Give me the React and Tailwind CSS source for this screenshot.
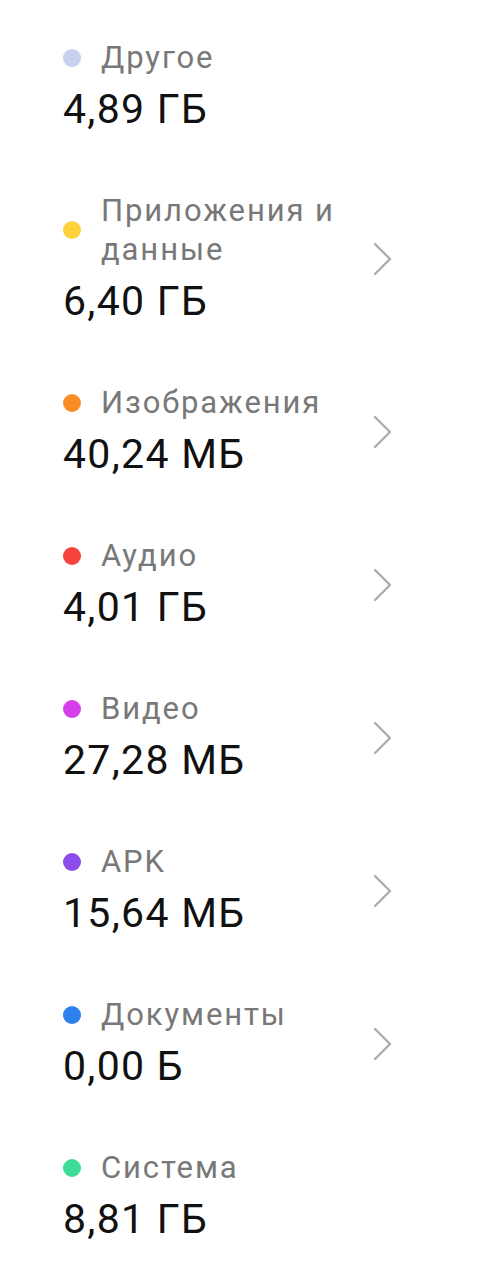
import React from "react";

const items = [
  { label: "Другое", value: "4,89 ГБ", color: "bg-[#c9d1ee]", chevron: false },
  { label: "Приложения и данные", value: "6,40 ГБ", color: "bg-[#fdd23b]", chevron: true },
  { label: "Изображения", value: "40,24 МБ", color: "bg-[#fb8d27]", chevron: true },
  { label: "Аудио", value: "4,01 ГБ", color: "bg-[#f6433d]", chevron: true },
  { label: "Видео", value: "27,28 МБ", color: "bg-[#d63ee9]", chevron: true },
  { label: "APK", value: "15,64 МБ", color: "bg-[#8b4ce9]", chevron: true },
  { label: "Документы", value: "0,00 Б", color: "bg-[#2e82ee]", chevron: true },
  { label: "Система", value: "8,81 ГБ", color: "bg-[#3ddb96]", chevron: false },
];

function Chevron() {
  return (
    <svg width="20" height="34" viewBox="0 0 20 34" fill="none">
      <polyline
        points="2,2 17,17 2,32"
        stroke="#adadad"
        strokeWidth="2.4"
        strokeLinecap="round"
        strokeLinejoin="round"
      />
    </svg>
  );
}

export default function App() {
  return (
    <div
      className="min-h-[1280px] w-full bg-white pt-[38px]"
      style={{ fontFamily: "Roboto, 'Noto Sans', sans-serif" }}
    >
      <div className="flex flex-col gap-[56px]">
        {items.map((it) => (
          <div key={it.label} className="flex items-center pl-[63px] pr-[93px]">
            <div className="flex flex-1 flex-col">
              <div className="flex items-center">
                <span className={`h-[18px] w-[18px] shrink-0 rounded-full ${it.color}`} />
                <span className="ml-[20px] max-w-[260px] text-[31px] leading-[39px] tracking-[1.9px] text-[#787878]">
                  {it.label}
                </span>
              </div>
              <div className="mt-[6px] text-[41px] leading-[52px] tracking-[1.3px] text-[#111111]">
                {it.value}
              </div>
            </div>
            {it.chevron && (
              <div className="shrink-0">
                <Chevron />
              </div>
            )}
          </div>
        ))}
      </div>
    </div>
  );
}
